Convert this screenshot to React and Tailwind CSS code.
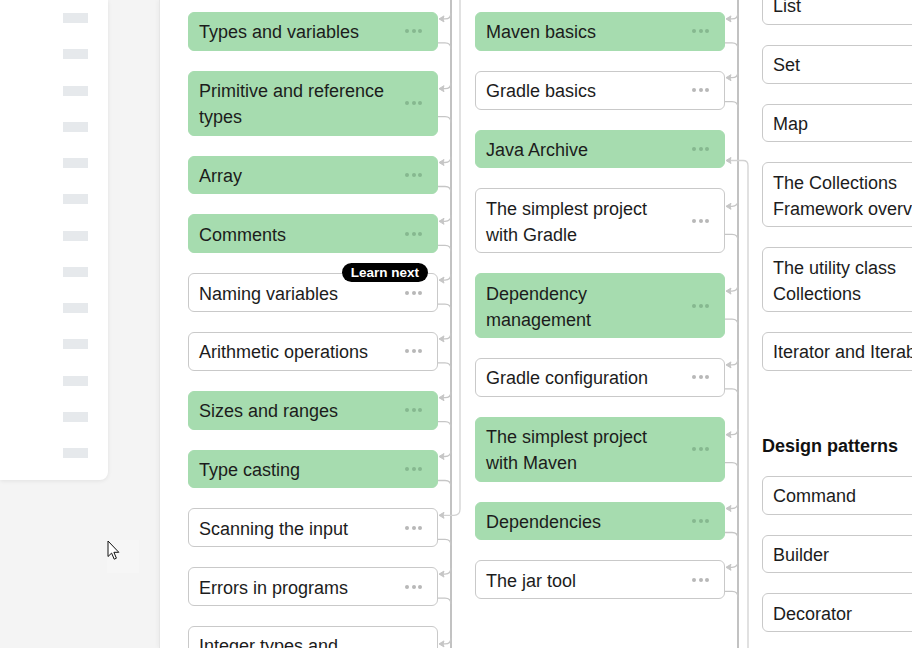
import clsx from 'clsx'

const ROW = 38.8
const LINE = 26
const GAP = 20

const col1 = [
  { t: ['Types and variables'], done: true },
  { t: ['Primitive and reference', 'types'], done: true },
  { t: ['Array'], done: true },
  { t: ['Comments'], done: true },
  { t: ['Naming variables'], badge: true },
  { t: ['Arithmetic operations'] },
  { t: ['Sizes and ranges'], done: true },
  { t: ['Type casting'], done: true },
  { t: ['Scanning the input'], from: 'side' },
  { t: ['Errors in programs'] },
  { t: ['Integer types and', 'operations'] },
]

const col2 = [
  { t: ['Maven basics'], done: true },
  { t: ['Gradle basics'] },
  { t: ['Java Archive'], done: true, from: 'side', noOut: true },
  { t: ['The simplest project', 'with Gradle'] },
  { t: ['Dependency', 'management'], done: true },
  { t: ['Gradle configuration'] },
  { t: ['The simplest project', 'with Maven'], done: true },
  { t: ['Dependencies'], done: true },
  { t: ['The jar tool'] },
]

const collections = [
  { t: ['List'] },
  { t: ['Set'] },
  { t: ['Map'] },
  { t: ['The Collections', 'Framework overview'] },
  { t: ['The utility class', 'Collections'] },
  { t: ['Iterator and Iterable'] },
]

const patterns = [{ t: ['Command'] }, { t: ['Builder'] }, { t: ['Decorator'] }]

// top / height of every card, same numbers the flex column ends up with
function place(items, start) {
  let y = start
  return items.map((it) => {
    const h = ROW + (it.t.length - 1) * LINE
    const mid = y + h / 2
    const two = it.t.length > 1
    const r = { ...it, top: y, h, inY: mid - (two ? 14.5 : 12.5), outY: mid + (two ? 13.5 : 11.5) }
    y += h + GAP
    return r
  })
}

function Dots({ done }) {
  return (
    <div className="flex shrink-0 gap-[2.5px]">
      {[0, 1, 2].map((i) => (
        <span key={i} className={clsx('h-[4px] w-[4px] rounded-full', done ? 'bg-[#86b88f]' : 'bg-[#b8b8b8]')} />
      ))}
    </div>
  )
}

function Card({ item }) {
  return (
    <div
      className={clsx(
        'relative flex w-[250px] shrink-0 items-center justify-between rounded-[6px] border pl-[10px] pr-[15px]',
        item.done ? 'border-[#a6dcaf] bg-[#a6dcaf]' : 'border-[#c9c9c9] bg-white',
        item.t.length > 1 ? 'h-[64.8px]' : 'h-[38.8px]'
      )}
    >
      <div className="pt-[2px] text-[18px] leading-[26px] text-[#1c1c1c]">
        {item.t.map((l) => (
          <div key={l} className="whitespace-nowrap">{l}</div>
        ))}
      </div>
      <Dots done={item.done} />
      {item.badge && (
        <span className="absolute -top-[11px] right-[9px] rounded-full bg-black px-[9px] text-[13.5px] font-bold leading-[19px] text-white">
          Learn next
        </span>
      )}
    </div>
  )
}

function Gutter({ items, side }) {
  const stroke = '#c6c6c6'
  const head = (y) => (
    <path d={`M1 ${y}L6 ${y - 3}L5 ${y}L6 ${y + 3}Z`} fill={stroke} stroke={stroke} strokeWidth="1" strokeLinejoin="round" />
  )
  return (
    <div className="relative w-[37px] shrink-0 self-stretch">
      <svg className="absolute left-0 top-0" width="37" height="700" fill="none">
        <path d="M13 0V700" stroke="#c2c2c2" strokeWidth="2" />
        {items.map((it) => (
          <g key={it.top}>
            {it.from !== 'side' && (
              <g>
                <path d={`M13 ${it.inY - 6}Q13 ${it.inY} 7 ${it.inY}H2`} stroke={stroke} strokeWidth="1.3" />
                {head(it.inY)}
              </g>
            )}
            {!it.noOut && (
              <path d={`M0 ${it.outY}H7Q13 ${it.outY} 13 ${it.outY + 6}`} stroke={stroke} strokeWidth="1.3" />
            )}
          </g>
        ))}
        {side && side.down && (
          <g>
            <path d={`M${side.x} 0V${side.y - 6}Q${side.x} ${side.y} ${side.x - 6} ${side.y}H2`} stroke="#d2d2d2" strokeWidth="1.3" />
            {head(side.y)}
          </g>
        )}
        {side && !side.down && (
          <g>
            <path d={`M2 ${side.y}H${side.x - 5}Q${side.x} ${side.y} ${side.x} ${side.y + 5}V700`} stroke="#d2d2d2" strokeWidth="1.3" />
            {head(side.y)}
          </g>
        )}
      </svg>
    </div>
  )
}

function Cursor() {
  return (
    <svg width="14" height="21" viewBox="0 0 14 21" className="block">
      <path d="M1 1V16.5L4.6 13.1L7.2 19.2L9.4 18.2L6.9 12.3H11.8Z" fill="#fff" stroke="#111" strokeWidth="1" strokeLinejoin="round" />
    </svg>
  )
}

export default function App() {
  const c1 = place(col1, 12)
  const c2 = place(col2, 12)

  const side1 = { x: 22, y: c1[8].inY, down: true }
  const side2 = { x: 23, y: c2[2].outY }

  return (
    <div className="flex h-[648px] w-[912px] overflow-hidden bg-[#f4f4f4] font-['Liberation_Sans',Arial,sans-serif]">
      {/* left nav (collapsed) */}
      <div className="relative w-[159px] shrink-0">
        <div className="h-[480px] w-[108px] rounded-br-[8px] bg-white pl-[63px] pt-[13px] shadow-[0_1px_4px_rgba(0,0,0,0.08)]">
          <div className="flex flex-col gap-[26.25px]">
            {Array.from({ length: 13 }).map((_, i) => (
              <div key={i} className="h-[10px] w-[25px] bg-[#e6e9ec]" />
            ))}
          </div>
        </div>
        <div className="absolute left-[107px] top-[540px] bg-[#f6f6f6] pb-[12px] pr-[18px]">
          <Cursor />
        </div>
      </div>

      {/* knowledge map */}
      <div className="flex min-w-0 flex-1 items-start border-l border-[#e6e6e6] bg-white pl-[28px] shadow-[-2px_0_4px_rgba(0,0,0,0.03)]">
        <div className="flex flex-col gap-[20px] pt-[12px]">
          {c1.map((it) => (
            <Card key={it.t[0]} item={it} />
          ))}
        </div>
        <Gutter items={c1} side={side1} />
        <div className="flex flex-col gap-[20px] pt-[12px]">
          {c2.map((it) => (
            <Card key={it.t[0]} item={it} />
          ))}
        </div>
        <Gutter items={c2} side={side2} />
        <div className="-mt-[14px] flex flex-col gap-[20px]">
          {collections.map((it) => (
            <Card key={it.t[0]} item={it} />
          ))}
          <div className="-mb-[2px] mt-[43px] text-[18px] font-bold leading-[24px] text-[#111]">Design patterns</div>
          {patterns.map((it) => (
            <Card key={it.t[0]} item={it} />
          ))}
        </div>
      </div>
    </div>
  )
}
